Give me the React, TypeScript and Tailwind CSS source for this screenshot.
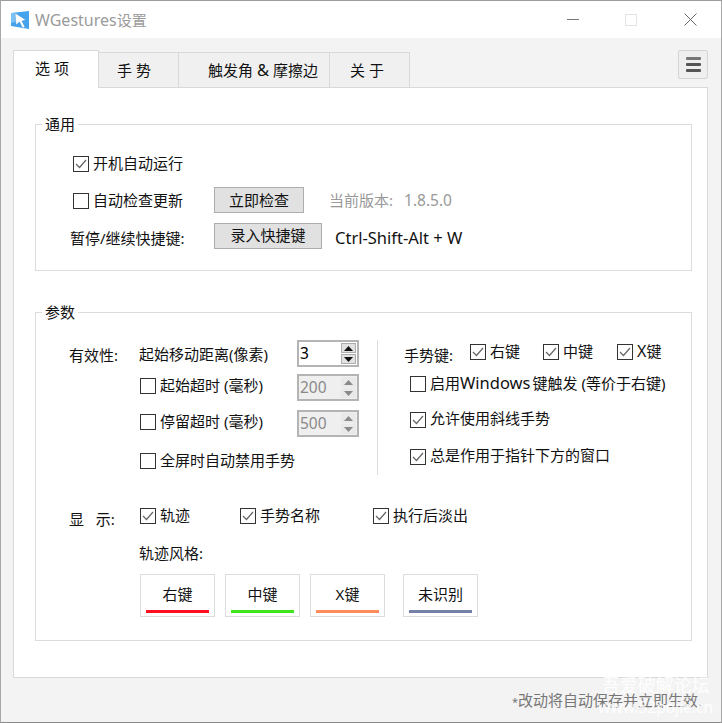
const font = "font-['Noto_Sans','Noto_Sans_CJK_SC',sans-serif]";

function CheckBox({ checked, label, className = "" }: { checked?: boolean; label: React.ReactNode; className?: string }) {
  return (
    <label className={`flex items-center gap-[4px] whitespace-pre ${className}`}>
      <span className="flex h-[16px] w-[16px] shrink-0 items-center justify-center border border-[#333] bg-white">
        {checked && (
          <svg width="12" height="10" viewBox="0 0 12 10" fill="none">
            <path d="M1 5l3.5 3.5L11 1" stroke="#666" strokeWidth="1.2" />
          </svg>
        )}
      </span>
      <span className="-mt-[2px]">{label}</span>
    </label>
  );
}

function Spinner({ value, disabled }: { value: string; disabled?: boolean }) {
  const arrow = disabled ? "#8a8a8a" : "#111";
  const btn = disabled ? "bg-[#e9e9e9]" : "bg-[#e1e1e1] border border-[#adadad]";
  return (
    <div className={`flex h-[27px] w-[62px] border-2 border-[#b4b4b4] ${disabled ? "bg-[#efefef] text-[#8a8a8a]" : "bg-white text-black"}`}>
      <span className="flex-1 pl-[1px] text-[15.5px] leading-[22px]">{value}</span>
      <div className="mr-[1px] flex w-[15px] flex-col gap-[1px] py-[1px]">
        <span className={`flex flex-1 items-center justify-center ${btn}`}>
          <svg width="9" height="5" viewBox="0 0 9 5"><path d="M4.5 0L9 5H0z" fill={arrow} /></svg>
        </span>
        <span className={`flex flex-1 items-center justify-center ${btn}`}>
          <svg width="9" height="5" viewBox="0 0 9 5"><path d="M0 0h9L4.5 5z" fill={arrow} /></svg>
        </span>
      </div>
    </div>
  );
}

function Group({ title, className, children }: { title: string; className: string; children: React.ReactNode }) {
  return (
    <section className={`relative border border-[#dcdcdc] ${className}`}>
      <span className="absolute left-[6px] top-[-11px] bg-white px-[3px] leading-[20px]">{title}</span>
      {children}
    </section>
  );
}

function Tab({ label, className, active }: { label: React.ReactNode; className: string; active?: boolean }) {
  return (
    <div
      className={`flex items-center whitespace-pre border-[#d9d9d9] ${className} ${
        active ? "relative z-10 h-[38px] border-x border-t bg-white pb-[3px]" : "h-[36px] border-y border-r bg-[#f0f0f0]"
      }`}
    >
      {label}
    </div>
  );
}

function TraceButton({ label, color, className = "" }: { label: string; color: string; className?: string }) {
  return (
    <div className={`flex h-[43px] w-[75px] flex-col items-center border border-[#dcdcdc] bg-white ${className}`}>
      <span className="mt-[9px] leading-[20px]">{label}</span>
      <span className={`mt-[6px] h-[3px] w-[63px] ${color}`} />
    </div>
  );
}

export default function App() {
  return (
    <div className={`relative flex h-[723px] w-[722px] flex-col overflow-hidden border-x border-t border-b border-x-[#a8a8a8] border-t-[#9c9c9c] border-b-[#8a8a8a] bg-[#f3f3f3] text-[15px] text-[#111] ${font}`}>
      {/* title bar */}
      <header className="flex h-[37px] shrink-0 items-center bg-white">
        <svg className="ml-[10px]" width="19" height="18" viewBox="0 0 19 18">
          <path d="M0 2L18 0v18L0 15z" fill="#45a3ee" />
          <path d="M0 2l5 0 6 7-11 3z" fill="#7cc2f5" />
          <path d="M4 2l11 7-4 1 3 6-2.500 1-3-6-3.500 3z" fill="#fff" stroke="#2c7fc4" strokeWidth="0.4" />
        </svg>
        <span className="ml-[5px] text-[#9b9b9b]">
          <span className="text-[16px]">WGestures</span>设置
        </span>
        <div className="ml-auto flex items-center">
          <span className="h-px w-[12px] bg-[#777]" />
          <span className="ml-[46px] h-[12px] w-[12px] border border-[#e4e4e4]" />
          <svg className="ml-[47px] mr-[24px]" width="13" height="13" viewBox="0 0 13 13">
            <path d="M0.5 0.5l12 12M12.5 0.5l-12 12" stroke="#666" strokeWidth="1" fill="none" />
          </svg>
        </div>
      </header>

      {/* tab strip */}
      <div className="ml-[12px] mr-[13px] mt-[12px] flex items-start justify-between">
        <div className="flex items-end">
          <Tab active label="选 项" className="w-[86px] pl-[21px]" />
          <Tab label="手 势" className="w-[80px] pl-[18px]" />
          <Tab label={<>触发角 <span className="text-[16.5px]">&amp;</span> 摩擦边</>} className="w-[151px] pl-[29px]" />
          <Tab label="关 于" className="w-[80px] pl-[20px]" />
        </div>
        <button className="flex h-[29px] w-[30px] flex-col items-center justify-center gap-[3px] rounded-[2px] border border-[#d4d4d4] bg-[#efefef]">
          <span className="h-[3px] w-[15px] rounded-[1px] bg-[#777]" />
          <span className="h-[3px] w-[15px] rounded-[1px] bg-[#555]" />
          <span className="h-[3px] w-[15px] rounded-[1px] bg-[#555]" />
        </button>
      </div>

      {/* tab panel */}
      <main className="ml-[12px] mr-[13px] mt-[-1px] h-[591px] border border-[#d9d9d9] bg-white pl-[21px] pr-[15px] pt-[36px]">
        <Group title="通用" className="h-[147px] pl-[37px] pt-[26px]">
          <div className="flex h-[26px] items-center">
            <CheckBox checked label="开机自动运行" />
          </div>
          <div className="mt-[10px] flex h-[26px] items-center">
            <CheckBox label="自动检查更新" className="mt-[2px] w-[141px]" />
            <button className="h-[26px] w-[90px] border border-[#adadad] bg-[#e1e1e1] pt-[1px]">立即检查</button>
            <span className="ml-[25px] mt-[2px] text-[#999]">
              当前版本:<span className="ml-[11px] text-[15.5px]">1.8.5.0</span>
            </span>
          </div>
          <div className="mt-[10px] flex h-[26px] items-center">
            <span className="ml-[-3px] mt-[4px] w-[144px]">暂停/继续快捷键:</span>
            <button className="h-[26px] w-[108px] border border-[#adadad] bg-[#e1e1e1] pb-[1px]">录入快捷键</button>
            <span className="ml-[13px] mt-[4px] text-[16.5px]">Ctrl-Shift-Alt + W</span>
          </div>
        </Group>

        <Group title="参数" className="mt-[41px] h-[329px] pl-[33px] pt-[27px]">
          <div className="flex">
            <div className="w-[70px] pt-[5px] leading-[20px]">有效性:</div>
            <div className="w-[238px]">
              <div className="flex h-[27px] items-center justify-between pr-[18px]">
                <span className="mt-[2px]">起始移动距离(像素)</span>
                <Spinner value="3" />
              </div>
              <div className="mt-[7px] flex h-[27px] items-center justify-between pl-px pr-[18px]">
                <CheckBox label="起始超时 (毫秒)" className="mb-[3px]" />
                <Spinner disabled value="200" />
              </div>
              <div className="mt-[9px] flex h-[27px] items-center justify-between pl-px pr-[18px]">
                <CheckBox label="停留超时 (毫秒)" className="mb-[3px]" />
                <Spinner disabled value="500" />
              </div>
              <div className="mt-[14px] flex h-[20px] items-center pl-px">
                <CheckBox label="全屏时自动禁用手势" />
              </div>
            </div>
            <div className="h-[135px] w-px bg-[#dcdcdc]" />
            <div className="pl-[26px]">
              <div className="flex h-[27px] items-center">
                <span className="mt-[3px] w-[66px]">手势键:</span>
                <CheckBox checked label="右键" className="mb-[3px] w-[73px]" />
                <CheckBox checked label="中键" className="mb-[3px] w-[74px]" />
                <CheckBox checked label={<><span className="text-[16px]">X</span>键</>} className="mb-[3px]" />
              </div>
              <CheckBox
                label={<>启用<span className="mr-[2px] text-[16.5px]">Windows</span>键触发 (等价于右键)</>}
                className="ml-[6px] mt-[6px]"
              />
              <CheckBox checked label="允许使用斜线手势" className="ml-[6px] mt-[13.5px]" />
              <CheckBox checked label="总是作用于指针下方的窗口" className="ml-[6px] mt-[16.5px]" />
            </div>
          </div>

          <div className="mt-[31px] flex h-[20px] items-center">
            <span className="mt-[6px] w-[71px] whitespace-pre">显&nbsp;&nbsp; 示:</span>
            <CheckBox checked label="轨迹" className="w-[100px]" />
            <CheckBox checked label="手势名称" className="w-[133px]" />
            <CheckBox checked label="执行后淡出" />
          </div>
          <div className="ml-[70px] mt-[17px] leading-[20px]">轨迹风格:</div>
          <div className="ml-[71px] mt-[11px] flex">
            <TraceButton label="右键" color="bg-[#ff1020]" />
            <TraceButton label="中键" color="bg-[#3ee61e]" className="ml-[10px]" />
            <TraceButton label="X键" color="bg-[#ff8c5a]" className="ml-[10px]" />
            <TraceButton label="未识别" color="bg-[#7480a8]" className="ml-[18px]" />
          </div>
        </Group>
      </main>

      <footer className="mr-[19px] mt-[12px] text-right leading-[20px] text-[#777]">
        <span className="text-[11px]">*</span>改动将自动保存并立即生效.
      </footer>

      {/* forum watermark over the corner */}
      <div className="pointer-events-none absolute bottom-[9px] right-[8px] text-center leading-none text-white/85">
        <div className="text-[18px]">吾爱破解论坛</div>
        <div className="mt-[7px] text-[15.5px] leading-[12px]">www.52pojie.cn</div>
      </div>
    </div>
  );
}
